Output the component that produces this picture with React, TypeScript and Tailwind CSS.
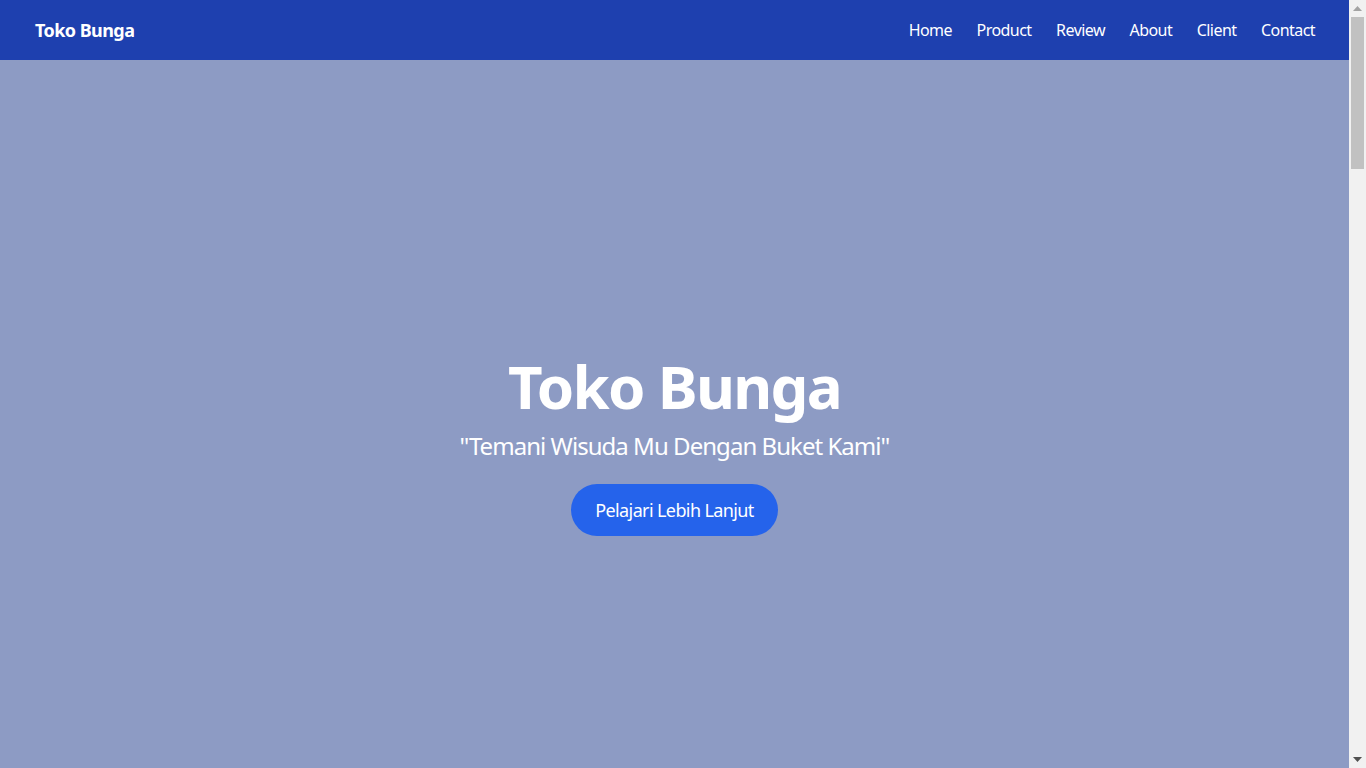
const navLinks = ["Home", "Product", "Review", "About", "Client", "Contact"];

const products = [
  { name: "Buket Mawar Merah", price: "Rp 150.000" },
  { name: "Buket Snack Wisuda", price: "Rp 120.000" },
  { name: "Buket Uang", price: "Rp 250.000" },
  { name: "Buket Boneka", price: "Rp 175.000" },
  { name: "Buket Bunga Kering", price: "Rp 130.000" },
  { name: "Buket Tulip", price: "Rp 200.000" },
];

const reviews = [
  { name: "Rina", text: "Buketnya cantik sekali, pengiriman tepat waktu!" },
  { name: "Dimas", text: "Harga terjangkau dan kualitas bunga segar." },
  { name: "Sari", text: "Pelayanan ramah, sangat puas dengan hasilnya." },
];

// window scrollbar as it shows in the screenshot
const ScrollBar = () => (
  <aside className="w-[17px] shrink-0 bg-[#f1f1f1] flex flex-col">
    <div className="h-[17px] flex items-center justify-center">
      <svg width="9" height="5" viewBox="0 0 9 5">
        <polygon points="4.5,0 9,5 0,5" fill="#a3a3a3" />
      </svg>
    </div>
    <div className="flex-1">
      <div className="h-[152px] mx-[2px] bg-[#c1c1c1]" />
    </div>
    <div className="h-[17px] flex items-center justify-center">
      <svg width="9" height="5" viewBox="0 0 9 5">
        <polygon points="0,0 9,0 4.5,5" fill="#505050" />
      </svg>
    </div>
  </aside>
);

const App = () => {
  return (
    <div className="h-screen flex font-['Segoe_UI','Noto_Sans',sans-serif] tracking-[-0.035em] text-gray-800">
      <main className="flex-1 overflow-y-auto">
        <header className="bg-[#1e40af] h-[60px] px-[34px] flex items-center justify-between text-white">
          <a href="#" className="text-lg font-bold pl-px">Toko Bunga</a>
          <nav className="flex items-center gap-[24.6px]">
            {navLinks.map((link) => (
              <a key={link} href={`#${link.toLowerCase()}`} className="text-base">
                {link}
              </a>
            ))}
          </nav>
        </header>

        <section id="home" className="h-[768px] pt-1 bg-[#8d9bc4] flex flex-col items-center justify-center text-white text-center">
          <h1 className="text-6xl font-bold tracking-[-0.028em]">Toko Bunga</h1>
          <p className="text-2xl mt-[14px] tracking-[-0.04em]">"Temani Wisuda Mu Dengan Buket Kami"</p>
          <button className="mt-[22px] bg-[#2563eb] text-white text-lg px-6 h-[52px] rounded-full tracking-[-0.034em]">
            Pelajari Lebih Lanjut
          </button>
        </section>

        <section id="product" className="py-20 px-[35px] bg-white">
          <h2 className="text-3xl font-bold text-center mb-10">Product</h2>
          <div className="grid grid-cols-3 gap-8">
            {products.map((p) => (
              <div key={p.name} className="rounded-xl shadow-md overflow-hidden">
                <div className="h-56 bg-[#c7d0ea]" />
                <div className="p-5">
                  <h3 className="text-lg font-semibold">{p.name}</h3>
                  <p className="text-[#2563eb] mt-1">{p.price}</p>
                </div>
              </div>
            ))}
          </div>
        </section>

        <section id="review" className="py-20 px-[35px] bg-gray-100">
          <h2 className="text-3xl font-bold text-center mb-10">Review</h2>
          <div className="grid grid-cols-3 gap-8">
            {reviews.map((r) => (
              <div key={r.name} className="bg-white rounded-xl shadow p-6 h-48">
                <p className="italic">"{r.text}"</p>
                <p className="mt-4 font-semibold">- {r.name}</p>
              </div>
            ))}
          </div>
        </section>

        <section id="about" className="py-20 px-[35px] bg-white">
          <h2 className="text-3xl font-bold text-center mb-10">About</h2>
          <div className="flex gap-10 items-center">
            <div className="w-1/2 h-80 bg-[#c7d0ea] rounded-xl" />
            <p className="w-1/2 text-lg leading-relaxed">
              Toko Bunga menyediakan berbagai buket untuk momen wisuda, ulang tahun, dan hari spesial lainnya.
            </p>
          </div>
        </section>

        <section id="client" className="py-20 px-[35px] bg-gray-100">
          <h2 className="text-3xl font-bold text-center mb-10">Client</h2>
          <div className="grid grid-cols-4 gap-8">
            {[1, 2, 3, 4].map((i) => (
              <div key={i} className="h-32 bg-white rounded-xl shadow" />
            ))}
          </div>
        </section>

        <section id="contact" className="py-20 px-[35px] bg-white">
          <h2 className="text-3xl font-bold text-center mb-10">Contact</h2>
          <div className="max-w-xl mx-auto flex flex-col gap-4">
            <div className="h-12 border border-gray-300 rounded-lg" />
            <div className="h-12 border border-gray-300 rounded-lg" />
            <div className="h-32 border border-gray-300 rounded-lg" />
            <button className="bg-[#2563eb] text-white py-3 rounded-lg">Kirim</button>
          </div>
        </section>

        <footer className="bg-[#1e40af] text-white text-center py-6">
          © 2024 Toko Bunga
        </footer>
      </main>
      <ScrollBar />
    </div>
  );
};

export default App;
